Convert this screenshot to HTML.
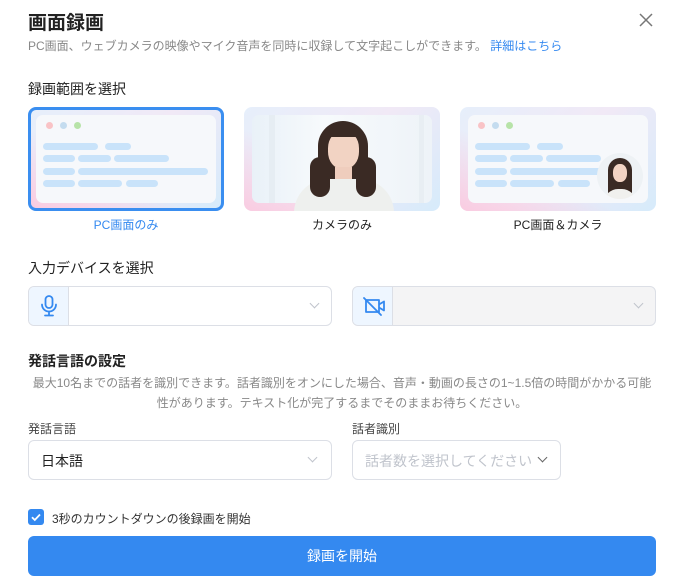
<!DOCTYPE html>
<html><head><meta charset="utf-8"><style>
*{box-sizing:border-box;margin:0;padding:0}
body{width:684px;height:587px;background:#fff;font-family:"Liberation Sans","Noto Sans CJK JP",sans-serif;position:relative;overflow:hidden;color:#222}
.a{position:absolute;white-space:nowrap}
.card{position:absolute;top:107px;width:196px;height:104px;border-radius:8px;background:linear-gradient(135deg,#e6effb 0%,#f1e9f6 50%,#d6ebfb 100%);overflow:hidden}
.card .in{position:absolute;left:8px;top:8px;right:8px;bottom:8px;border-radius:7px;background:#f6f8fb}
.card::before{content:"";position:absolute;left:0;bottom:0;width:100%;height:100%;background:linear-gradient(to top right,rgba(255,190,215,.7),rgba(255,255,255,0) 40%)}
.dot{position:absolute;top:14px;width:7px;height:7px;border-radius:50%}
.bar{position:absolute;height:7px;border-radius:4px;background:#c9e3fa}
.lbl{position:absolute;top:216px;font-size:12px;text-align:center;width:196px}
.box{position:absolute;height:40px;border:1px solid #dcdfe6;border-radius:6px;background:#fff;overflow:hidden}
.ic{position:absolute;left:0;top:0;bottom:0;width:40px;background:#eef6ff;border-right:1px solid #dcdfe6}
.chev{position:absolute;top:14px;width:7px;height:7px;border-right:1px solid #c0c4cc;border-bottom:1px solid #c0c4cc;transform:rotate(45deg)}
</style></head><body>
<div class="a" style="left:28px;top:8px;font-size:19px;font-weight:bold;color:#222">画面録画</div>
<svg class="a" style="left:639px;top:13px" width="14" height="14"><path d="M1 1l12 12M13 1L1 13" stroke="#777" stroke-width="1.5"/></svg>
<div class="a" style="left:28px;top:37px;font-size:12px;color:#888">PC画面、ウェブカメラの映像やマイク音声を同時に収録して文字起こしができます。 <span style="color:#3489f0">詳細はこちら</span></div>
<div class="a" style="left:28px;top:79px;font-size:14px;color:#222">録画範囲を選択</div>

<div class="card" style="left:28px;border:3px solid #3a8ef0">
 <div class="in" style="left:5px;top:5px;right:5px;bottom:5px"></div>
 <div class="dot" style="left:15px;top:12px;background:#f9c3c6"></div><div class="dot" style="left:29px;top:12px;background:#c4dcef"></div><div class="dot" style="left:43px;top:12px;background:#b7e3a8"></div>
 <div class="bar" style="left:12px;top:33px;width:55px"></div><div class="bar" style="left:74px;top:33px;width:26px"></div>
 <div class="bar" style="left:12px;top:45px;width:32px"></div><div class="bar" style="left:47px;top:45px;width:33px"></div><div class="bar" style="left:83px;top:45px;width:55px"></div>
 <div class="bar" style="left:12px;top:58px;width:32px"></div><div class="bar" style="left:47px;top:58px;width:130px"></div>
 <div class="bar" style="left:12px;top:70px;width:32px"></div><div class="bar" style="left:47px;top:70px;width:44px"></div><div class="bar" style="left:95px;top:70px;width:32px"></div>
</div>

<div class="card" style="left:244px">
 <div class="in" style="background:linear-gradient(90deg,#e9f1f8,#f7fafc 40%,#eef3f8)"></div>
 <div style="position:absolute;left:25px;top:8px;width:6px;height:88px;background:#e6edf3"></div>
 <div style="position:absolute;left:175px;top:8px;width:5px;height:88px;background:#e8eef3"></div>
 <div style="position:absolute;left:50px;top:72px;width:100px;height:34px;border-radius:40px 40px 0 0;background:#eef0ee"></div>
 <div style="position:absolute;left:74px;top:14px;width:50px;height:58px;border-radius:25px 25px 4px 4px;background:#3a2a24"></div>
 <div style="position:absolute;left:66px;top:50px;width:20px;height:40px;border-radius:10px 4px 10px 10px;background:#3a2a24"></div>
 <div style="position:absolute;left:112px;top:50px;width:20px;height:40px;border-radius:4px 10px 10px 10px;background:#3a2a24"></div>
 <div style="position:absolute;left:84px;top:24px;width:31px;height:38px;border-radius:45%;background:#f2d3c3"></div>
 <div style="position:absolute;left:91px;top:60px;width:17px;height:12px;background:#efcdbd"></div>
 <div style="position:absolute;left:84px;top:20px;width:31px;height:10px;border-radius:15px 15px 0 0;background:#3a2a24"></div>
</div>

<div class="card" style="left:460px">
 <div class="in"></div>
 <div class="dot" style="left:18px;top:15px;background:#f9c3c6"></div><div class="dot" style="left:32px;top:15px;background:#c4dcef"></div><div class="dot" style="left:46px;top:15px;background:#b7e3a8"></div>
 <div class="bar" style="left:15px;top:36px;width:55px"></div><div class="bar" style="left:77px;top:36px;width:26px"></div>
 <div class="bar" style="left:15px;top:48px;width:32px"></div><div class="bar" style="left:50px;top:48px;width:33px"></div><div class="bar" style="left:86px;top:48px;width:55px"></div>
 <div class="bar" style="left:15px;top:61px;width:32px"></div><div class="bar" style="left:50px;top:61px;width:100px"></div>
 <div class="bar" style="left:15px;top:73px;width:32px"></div><div class="bar" style="left:50px;top:73px;width:44px"></div><div class="bar" style="left:98px;top:73px;width:32px"></div>
 <div style="position:absolute;left:137px;top:46px;width:46px;height:46px;border-radius:50%;background:#eef2f5;overflow:hidden">
  <div style="position:absolute;left:11px;top:5px;width:24px;height:38px;border-radius:12px 12px 4px 4px;background:#3a2a24"></div>
  <div style="position:absolute;left:16px;top:11px;width:14px;height:18px;border-radius:45%;background:#f2d3c3"></div>
  <div style="position:absolute;left:7px;top:36px;width:32px;height:14px;border-radius:14px 14px 0 0;background:#f0f0ee"></div>
 </div>
</div>

<div class="lbl" style="left:28px;color:#3489f0">PC画面のみ</div>
<div class="lbl" style="left:244px">カメラのみ</div>
<div class="lbl" style="left:460px">PC画面＆カメラ</div>

<div class="a" style="left:28px;top:258px;font-size:14px">入力デバイスを選択</div>
<div class="box" style="left:28px;top:286px;width:304px">
 <div class="ic"><svg width="40" height="38" viewBox="0 0 40 38"><g fill="none" stroke="#3489f0" stroke-width="1.8" stroke-linecap="round"><rect x="16.5" y="9" width="7" height="12" rx="3.5"/><path d="M13 17.5a7 7 0 0 0 14 0M20 24.5v4M16 28.5h8"/></g></svg></div>
 <div class="chev" style="left:282px;top:13px"></div>
</div>
<div class="box" style="left:352px;top:286px;width:304px;background:#f4f4f5">
 <div class="ic"><svg width="40" height="38" viewBox="0 0 40 38"><g fill="none" stroke="#3489f0" stroke-width="1.8" stroke-linejoin="round"><path d="M13 13h13v12H13z"/><path d="M26 17.5l5-3v9l-5-3"/><path d="M11 11l17 17" stroke-linecap="round"/></g></svg></div>
 <div class="chev" style="left:282px;top:13px"></div>
</div>

<div class="a" style="left:28px;top:351px;font-size:14px;font-weight:bold">発話言語の設定</div>
<div style="position:absolute;left:28px;top:373px;width:628px;font-size:12px;color:#888;text-align:center;line-height:20px">最大10名までの話者を識別できます。話者識別をオンにした場合、音声・動画の長さの1~1.5倍の時間がかかる可能性があります。テキスト化が完了するまでそのままお待ちください。</div>
<div class="a" style="left:28px;top:420px;font-size:12px;color:#444">発話言語</div>
<div class="a" style="left:352px;top:420px;font-size:12px;color:#444">話者識別</div>
<div class="box" style="left:28px;top:440px;width:304px"><div class="a" style="left:12px;top:10px;font-size:14px">日本語</div><div class="chev" style="left:280px;top:13px"></div></div>
<div class="box" style="left:352px;top:440px;width:209px"><div class="a" style="left:12px;top:10px;font-size:14px;color:#c0c4cc">話者数を選択してください</div><div class="chev" style="left:186px;top:13px;border-color:#666"></div></div>

<div style="position:absolute;left:28px;top:509px;width:16px;height:16px;border-radius:3px;background:#3489f0"><svg width="16" height="16"><path d="M4 8.2l2.8 2.8L12 5.5" fill="none" stroke="#fff" stroke-width="1.8"/></svg></div>
<div class="a" style="left:52px;top:510px;font-size:12px;color:#333">3秒のカウントダウンの後録画を開始</div>
<div style="position:absolute;left:28px;top:536px;width:628px;height:40px;border-radius:6px;background:#3489f0;color:#fff;font-size:14px;text-align:center;line-height:40px">録画を開始</div>
</body></html>
